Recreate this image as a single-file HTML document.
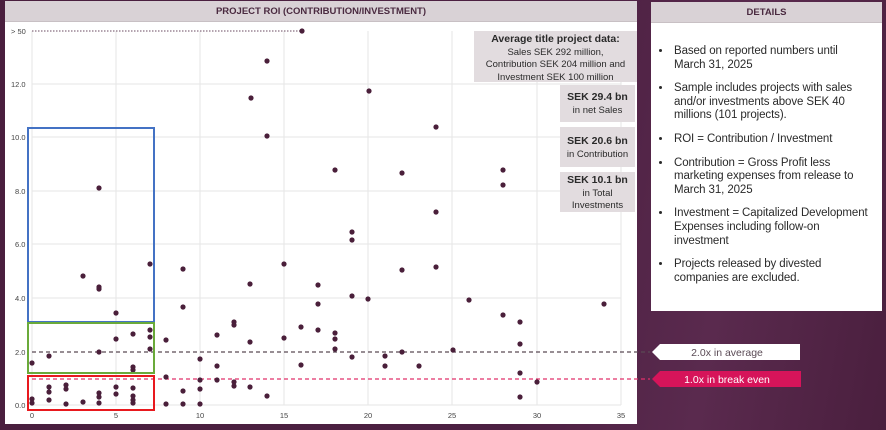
<!DOCTYPE html>
<html><head><meta charset="utf-8"><style>
html,body{margin:0;padding:0;}
body{width:886px;height:430px;overflow:hidden;background:linear-gradient(100deg,#4a1f3e 0%,#4c2042 60%,#5a2a4e 80%,#4a1f3e 100%);font-family:"Liberation Sans",sans-serif;position:relative;}
.p{position:absolute;background:#fff;}
.hd{position:absolute;left:0;right:0;top:0;height:20px;background:#d9d2d6;color:#4a2a40;font-weight:bold;font-size:9.5px;text-align:center;line-height:21px;border-bottom:1px solid #c8c0c4;}
ul{margin:0;padding:0 0 0 21px;font-size:11.5px;color:#2a2a2a;line-height:13.6px;width:202px;letter-spacing:-0.1px;}
li{margin-bottom:10px;padding-left:2px}
.box{position:absolute;background:#e2dcdf;color:#2a2a2a;font-size:9.5px;text-align:center;line-height:12.5px;}
.box b{font-size:10.5px;}
</style></head><body>
<div class="p" style="left:5px;top:1px;width:632px;height:423px;">
<div class="hd">PROJECT ROI (CONTRIBUTION/INVESTMENT)</div>
</div>
<svg style="position:absolute;left:0;top:0" width="886" height="430">
<g stroke="#e6e6e6" stroke-width="1">
<line x1="32" y1="31" x2="32" y2="405"/><line x1="116" y1="31" x2="116" y2="405"/><line x1="200" y1="31" x2="200" y2="405"/><line x1="284" y1="31" x2="284" y2="405"/><line x1="368" y1="31" x2="368" y2="405"/><line x1="452" y1="31" x2="452" y2="405"/><line x1="537" y1="31" x2="537" y2="405"/><line x1="621" y1="31" x2="621" y2="405"/>
<line x1="32" y1="84" x2="621" y2="84"/><line x1="32" y1="137" x2="621" y2="137"/><line x1="32" y1="191" x2="621" y2="191"/><line x1="32" y1="244" x2="621" y2="244"/><line x1="32" y1="298" x2="621" y2="298"/><line x1="32" y1="405" x2="621" y2="405"/>
</g>
<line x1="32" y1="31" x2="302" y2="31" stroke="#6a4a60" stroke-dasharray="1.5,1.5"/>
<line x1="32" y1="352" x2="650" y2="352" stroke="#5a4a55" stroke-width="1.2" stroke-dasharray="4,3"/>
<line x1="32" y1="379" x2="650" y2="379" stroke="#e0306a" stroke-width="1.2" stroke-dasharray="4,3"/>
<g font-size="7.5" fill="#444" font-family="Liberation Sans">
<text x="11" y="34">&gt; 50</text><text x="11" y="87">12.0</text><text x="11" y="140">10.0</text><text x="15" y="194">8.0</text><text x="15" y="247">6.0</text><text x="15" y="301">4.0</text><text x="15" y="355">2.0</text><text x="15" y="408">0.0</text>
<g text-anchor="middle"><text x="32" y="418">0</text><text x="116" y="418">5</text><text x="200" y="418">10</text><text x="284" y="418">15</text><text x="368" y="418">20</text><text x="452" y="418">25</text><text x="537" y="418">30</text><text x="621" y="418">35</text></g>
</g>
<g fill="#4a1f3a">
<circle cx="32" cy="363" r="2.6"/><circle cx="32" cy="399" r="2.6"/><circle cx="32" cy="403" r="2.6"/>
<circle cx="49" cy="356" r="2.6"/><circle cx="49" cy="387" r="2.6"/><circle cx="49" cy="392" r="2.6"/><circle cx="49" cy="400" r="2.6"/>
<circle cx="66" cy="385" r="2.6"/><circle cx="66" cy="389" r="2.6"/><circle cx="66" cy="404" r="2.6"/>
<circle cx="83" cy="276" r="2.6"/><circle cx="83" cy="402" r="2.6"/>
<circle cx="99" cy="188" r="2.6"/><circle cx="99" cy="287" r="2.6"/><circle cx="99" cy="289" r="2.6"/><circle cx="99" cy="352" r="2.6"/><circle cx="99" cy="393" r="2.6"/><circle cx="99" cy="397" r="2.6"/><circle cx="99" cy="403" r="2.6"/>
<circle cx="116" cy="313" r="2.6"/><circle cx="116" cy="339" r="2.6"/><circle cx="116" cy="387" r="2.6"/><circle cx="116" cy="394" r="2.6"/>
<circle cx="133" cy="334" r="2.6"/><circle cx="133" cy="367" r="2.6"/><circle cx="133" cy="370" r="2.6"/><circle cx="133" cy="388" r="2.6"/><circle cx="133" cy="396" r="2.6"/><circle cx="133" cy="400" r="2.6"/><circle cx="133" cy="403" r="2.6"/>
<circle cx="150" cy="264" r="2.6"/><circle cx="150" cy="330" r="2.6"/><circle cx="150" cy="337" r="2.6"/><circle cx="150" cy="349" r="2.6"/>
<circle cx="166" cy="340" r="2.6"/><circle cx="166" cy="377" r="2.6"/><circle cx="166" cy="404" r="2.6"/>
<circle cx="183" cy="269" r="2.6"/><circle cx="183" cy="307" r="2.6"/><circle cx="183" cy="391" r="2.6"/><circle cx="183" cy="404" r="2.6"/>
<circle cx="200" cy="359" r="2.6"/><circle cx="200" cy="380" r="2.6"/><circle cx="200" cy="389" r="2.6"/><circle cx="200" cy="404" r="2.6"/>
<circle cx="217" cy="335" r="2.6"/><circle cx="217" cy="366" r="2.6"/><circle cx="217" cy="380" r="2.6"/>
<circle cx="234" cy="322" r="2.6"/><circle cx="234" cy="325" r="2.6"/><circle cx="234" cy="382" r="2.6"/><circle cx="234" cy="386" r="2.6"/>
<circle cx="251" cy="98" r="2.6"/><circle cx="250" cy="284" r="2.6"/><circle cx="250" cy="342" r="2.6"/><circle cx="250" cy="387" r="2.6"/>
<circle cx="267" cy="61" r="2.6"/><circle cx="267" cy="136" r="2.6"/><circle cx="267" cy="396" r="2.6"/>
<circle cx="284" cy="264" r="2.6"/><circle cx="284" cy="338" r="2.6"/>
<circle cx="302" cy="31" r="2.6"/><circle cx="301" cy="327" r="2.6"/><circle cx="301" cy="365" r="2.6"/>
<circle cx="318" cy="285" r="2.6"/><circle cx="318" cy="304" r="2.6"/><circle cx="318" cy="330" r="2.6"/>
<circle cx="335" cy="170" r="2.6"/><circle cx="335" cy="333" r="2.6"/><circle cx="335" cy="339" r="2.6"/><circle cx="335" cy="349" r="2.6"/>
<circle cx="352" cy="232" r="2.6"/><circle cx="352" cy="240" r="2.6"/><circle cx="352" cy="296" r="2.6"/><circle cx="352" cy="357" r="2.6"/>
<circle cx="369" cy="91" r="2.6"/><circle cx="368" cy="299" r="2.6"/>
<circle cx="385" cy="356" r="2.6"/><circle cx="385" cy="366" r="2.6"/>
<circle cx="402" cy="173" r="2.6"/><circle cx="402" cy="270" r="2.6"/><circle cx="402" cy="352" r="2.6"/>
<circle cx="419" cy="366" r="2.6"/>
<circle cx="436" cy="127" r="2.6"/><circle cx="436" cy="212" r="2.6"/><circle cx="436" cy="267" r="2.6"/>
<circle cx="453" cy="350" r="2.6"/><circle cx="469" cy="300" r="2.6"/>
<circle cx="503" cy="170" r="2.6"/><circle cx="503" cy="185" r="2.6"/><circle cx="503" cy="315" r="2.6"/>
<circle cx="520" cy="322" r="2.6"/><circle cx="520" cy="344" r="2.6"/><circle cx="520" cy="373" r="2.6"/><circle cx="520" cy="397" r="2.6"/>
<circle cx="537" cy="382" r="2.6"/><circle cx="604" cy="304" r="2.6"/>
</g>
<rect x="28" y="128" width="126" height="194" fill="none" stroke="#4472c4" stroke-width="2"/>
<rect x="28" y="323" width="126" height="50" fill="none" stroke="#6aaa3a" stroke-width="2"/>
<rect x="28" y="376" width="126" height="34" fill="none" stroke="#e8191e" stroke-width="2"/>
<polygon points="652,352 660,344 800,344 800,360 660,360" fill="#fff"/>
<text x="727" y="356" font-size="10.5" fill="#5a4a55" text-anchor="middle" font-family="Liberation Sans">2.0x in average</text>
<polygon points="652,379 660,371 801,371 801,387 660,387" fill="#d6145a"/>
<text x="727" y="383" font-size="10.5" fill="#fff" text-anchor="middle" font-family="Liberation Sans">1.0x in break even</text>
</svg>
<div class="box" style="left:474px;top:31px;width:163px;height:51px;padding-top:2px;box-sizing:border-box;"><b>Average title project data:</b><br>Sales SEK 292 million,<br>Contribution SEK 204 million and<br>Investment SEK 100 million</div>
<div class="box" style="left:560px;top:85px;width:75px;height:37px;padding-top:6px;box-sizing:border-box;"><b>SEK 29.4 bn</b><br>in net Sales</div>
<div class="box" style="left:560px;top:127px;width:75px;height:40px;padding-top:8px;box-sizing:border-box;"><b>SEK 20.6 bn</b><br>in Contribution</div>
<div class="box" style="left:560px;top:172px;width:75px;height:40px;padding-top:2px;box-sizing:border-box;"><b>SEK 10.1 bn</b><br>in Total<br>Investments</div>
<div class="p" style="left:651px;top:2px;width:231px;height:309px;">
<div class="hd">DETAILS</div>
<ul style="margin-top:43px;">
<li>Based on reported numbers until<br>March 31, 2025</li>
<li>Sample includes projects with sales and/or investments above SEK 40 millions (101 projects).</li>
<li>ROI = Contribution / Investment</li>
<li>Contribution = Gross Profit less marketing expenses from release to March 31, 2025</li>
<li>Investment = Capitalized Development Expenses including follow-on investment</li>
<li>Projects released by divested companies are excluded.</li>
</ul>
</div>
</body></html>
